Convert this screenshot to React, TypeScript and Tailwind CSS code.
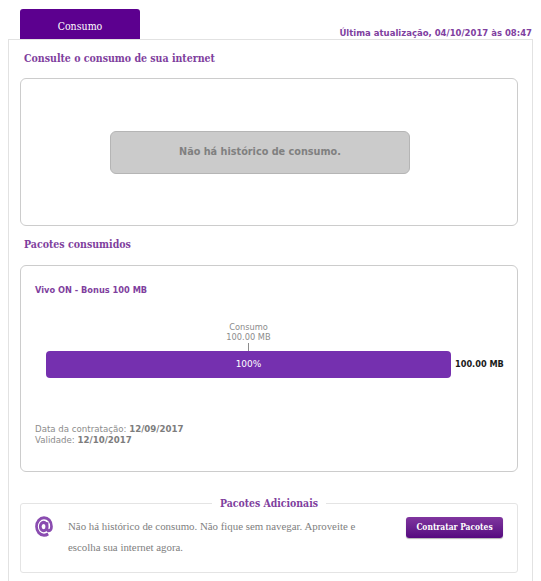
export default function App() {
  const slab = "font-['DejaVu_Serif_Condensed','DejaVu_Serif',serif]";
  const verdana = "font-['DejaVu_Sans','Liberation_Sans',sans-serif]";

  return (
    <div className={`w-[541px] h-[581px] overflow-hidden bg-white pt-[9px] ${verdana}`}>
      <div className="flex items-end justify-between pl-[20px] pr-[9px]">
        <div
          className={`w-[120px] h-[30px] rounded-t-[3px] bg-[#5c008f] flex items-center justify-center pt-[5px] text-[10.5px] text-white ${slab}`}
        >
          Consumo
        </div>
        <div className="mb-[-1px] text-[8.5px] font-bold leading-[14px] text-[#80409f]">
          Última atualização, 04/10/2017 às 08:47
        </div>
      </div>

      <div className="mx-[8px] w-[525px] h-[560px] border border-[#e2e2e2] pl-[11px] pr-[14px]">
        <h2 className={`mt-[10px] h-[17px] text-[10.5px] font-bold leading-[17px] text-[#7f3f9e] ${slab}`}>
          <span className="pl-[4px]">Consulte o consumo de sua internet</span>
        </h2>

        <div className="mt-[11px] h-[148px] rounded-[6px] border border-[#cccccc] flex items-center pl-[89px]">
          <div className="w-[300px] h-[43px] rounded-[6px] border border-[#b5b5b5] bg-[#cbcbcb] flex items-center justify-center text-[9.7px] font-bold text-[#808080]">
            Não há histórico de consumo.
          </div>
        </div>

        <h2 className={`mt-[10px] h-[17px] text-[10.5px] font-bold leading-[17px] text-[#7f3f9e] ${slab}`}>
          <span className="pl-[4px]">Pacotes consumidos</span>
        </h2>

        <div className="mt-[12px] h-[207px] rounded-[6px] border border-[#cccccc] pl-[14px] pr-[14px] pt-[18px] flex flex-col">
          <div className="text-[8.25px] font-bold leading-[12px] text-[#7f3f9e]">Vivo ON - Bonus 100 MB</div>

          <div className="mt-[26px] w-[405px] ml-[11px] flex flex-col items-center text-[8.25px] leading-[10px] text-[#8c8c8c]">
            <div>Consumo</div>
            <div>100.00 MB</div>
            <div className="mt-[1px] h-[8px] w-px bg-[#8c8c8c]" />
          </div>

          <div className="flex items-center ml-[11px]">
            <div className="w-[405px] shrink-0 h-[27px] rounded-[4px] bg-[#7530af] flex items-center justify-center text-[9px] text-white">
              100%
            </div>
            <div className="ml-[4px] whitespace-nowrap text-[8.2px] font-bold text-[#1a1a1a]">100.00 MB</div>
          </div>

          <div className="mt-[46px] text-[8.65px] leading-[11px] text-[#8c8c8c]">
            <div>
              Data da contratação: <b className="text-[#7d7d7d]">12/09/2017</b>
            </div>
            <div>
              Validade: <b className="text-[#7d7d7d]">12/10/2017</b>
            </div>
          </div>
        </div>

        <fieldset className="mt-[24px] h-[77px] rounded-[3px] border border-[#e4e4e4] px-[14px] pt-[6px]">
          <legend className={`mx-auto px-[8px] text-[10.4px] font-bold leading-[14px] text-[#7f3f9e] ${slab}`}>
            Pacotes Adicionais
          </legend>
          <div className="flex items-start">
            <svg viewBox="0 0 24 24" preserveAspectRatio="none" className="h-[21px] w-[18px] shrink-0 text-[#8a4cb0]" fill="none" stroke="currentColor" strokeWidth="3.6">
              <ellipse cx="11.5" cy="12" rx="4.5" ry="4.8" />
              <path d="M16 7v7c0 2 1.2 2.8 2.6 2.8 1.8 0 3.4-1.8 3.4-4.8C22 6.2 17.6 2 12 2S2 6.5 2 12s4.3 10 10 10c2.2 0 4-.5 5.6-1.5" />
            </svg>
            <p className="ml-[15px] w-[300px] text-[10.85px] leading-[21px] text-[#808080] font-['Liberation_Serif',serif]">
              Não há histórico de consumo. Não fique sem navegar. Aproveite e escolha sua internet agora.
            </p>
            <button className={`ml-auto mt-[1px] h-[21px] w-[97px] rounded-[3px] bg-gradient-to-b from-[#80359f] to-[#56087f] text-[8.4px] font-bold text-white shadow-[0_1px_1px_rgba(0,0,0,0.3)] ${slab}`}>
              Contratar Pacotes
            </button>
          </div>
        </fieldset>
      </div>
    </div>
  );
}
